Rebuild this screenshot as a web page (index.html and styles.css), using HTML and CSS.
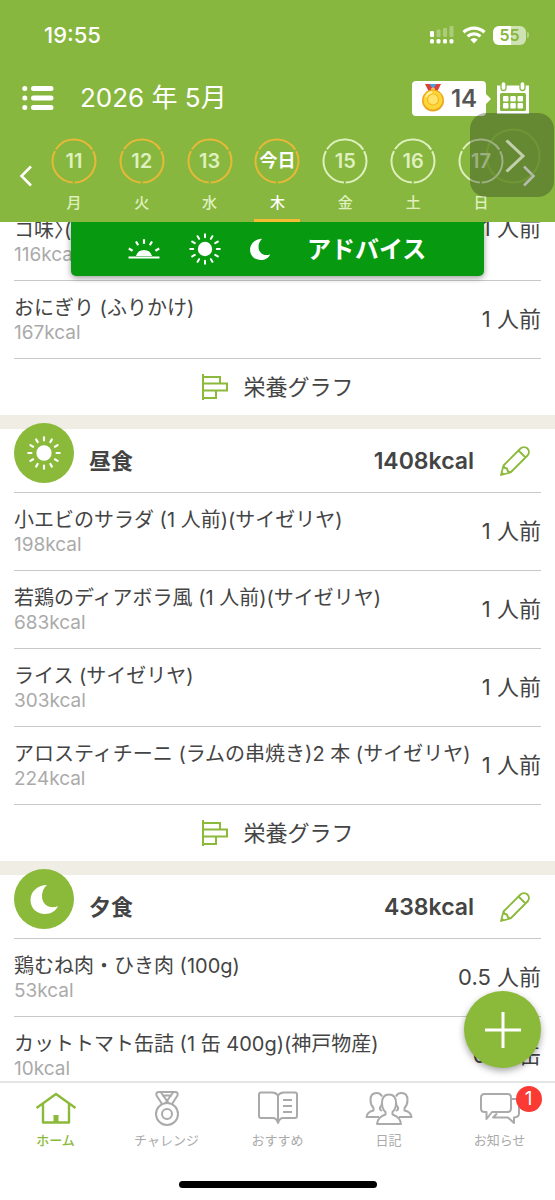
FILE: index.html
```html
<!DOCTYPE html>
<html lang="ja">
<head>
<meta charset="utf-8">
<meta name="viewport" content="width=device-width, initial-scale=1">
<title>食事記録</title>
<link rel="stylesheet" href="styles.css">
</head>
<body>
<svg class="defs" aria-hidden="true">
  <symbol id="ring" viewBox="0 0 46 46"><circle cx="23" cy="23" r="21.5" pathLength="360" fill="none" stroke="currentColor" stroke-width="2" stroke-dasharray="115 5" transform="rotate(93 23 23)"/></symbol>
  <symbol id="sun" viewBox="0 0 32 32"><circle cx="16" cy="16" r="7.2" fill="currentColor"/><g stroke="currentColor" stroke-width="2" stroke-linecap="round"><path d="M16 1.200v3M16 27.800v3M1.200 16h3M27.800 16h3M8.600 3.200l1.500 2.600M21.900 26.200l1.500 2.600M3.200 8.600l2.600 1.500M26.200 21.900l2.600 1.500M3.200 23.400l2.600-1.500M26.200 10.100l2.600-1.500M8.600 28.800l1.500-2.600M21.900 5.800l1.500-2.600"/></g></symbol>
  <symbol id="moon" viewBox="0 0 30 32"><path d="M18 2C8.500 2.200 1.500 8.500 1.500 17S8 31 16 31c6 0 11-3.200 13-8-1.500.8-3 1.200-5 1.200-6.500 0-11-4.600-11-11 0-4.600 1.700-8.200 5-11.200z" fill="currentColor"/></symbol>
  <symbol id="sunrise" viewBox="0 0 34 22"><path d="M9 18a8.300 8.300 0 0 1 16 0z" fill="currentColor"/><path d="M1.500 19.500h31M17 1.200v4.500M9 3.500l2.200 3.800M25 3.500l-2.200 3.800M1.800 10.500l3.800 2.200M32.200 10.500l-3.800 2.200" stroke="currentColor" stroke-width="2.200"/></symbol>
  <symbol id="bars" viewBox="0 0 28 28"><path d="M2 1v26M2 4h17v6.500H2M2 10.500h24v7H2M2 17.500h13V25H2" fill="none" stroke="currentColor" stroke-width="2"/></symbol>
  <symbol id="pencil" viewBox="0 0 32 32"><path d="M2 30l2.500-9.500L21.500 3.500a4.800 4.800 0 0 1 7 7L11.500 27.500zM19.500 5.500l7 7M4.500 20.500q.5 3 3.500 3 .5 3.500 3.500 4M2.800 27.500l1.800 1.800" fill="none" stroke="currentColor" stroke-width="1.800" stroke-linejoin="round"/></symbol>
</svg>

<header class="header">
  <div class="status">
    <time>19:55</time>
    <div class="status-icons">
      <svg width="26" height="18" viewBox="0 0 26 18" fill="#fff"><rect x="1" y="5" width="4" height="6" rx="1"/><g opacity=".3"><rect x="7.500" y="3.500" width="4" height="7.500" rx="1"/><rect x="14" y="2" width="4" height="9" rx="1"/><rect x="20.500" y="0" width="4" height="11" rx="1"/></g><rect x="1" y="13" width="4" height="4.500" rx="1.500"/><rect x="7.500" y="13" width="4" height="4.500" rx="1.500"/><rect x="14" y="13" width="4" height="4.500" rx="1.500"/><rect x="20.500" y="13" width="4" height="4.500" rx="1.500"/></svg>
      <svg width="24" height="18" viewBox="0 0 24 18"><g fill="none" stroke="#fff" stroke-width="3.200"><path d="M1.500 6.200a15.500 15.500 0 0 1 21 0"/><path d="M5.600 10.400a9.500 9.500 0 0 1 12.800 0"/></g><path d="M8.300 13.600a5.600 5.600 0 0 1 7.400 0L12 17.400z" fill="#fff"/></svg>
      <div class="battery">55</div>
    </div>
  </div>
  <div class="titlebar">
    <button class="icon-button" aria-label="メニュー"><svg width="32" height="26" viewBox="0 0 32 26" stroke="#fff" stroke-width="5" stroke-linecap="round"><path d="M2.800 3.500h.01M2.800 13h.01M2.800 22.500h.01M11.500 3.500H29M11.500 13H29M11.500 22.500H29"/></svg></button>
    <h1>2026 年 5月</h1>
    <button class="medal-count">
      <svg width="24" height="30" viewBox="0 0 24 30"><path d="M4 1h6l4 8H8z" fill="#d9423b"/><path d="M20 1h-6l-4 8h6z" fill="#d9423b"/><path d="M8.500 1h7L12 6z" fill="#4b9fdc"/><circle cx="12" cy="6.500" r="2" fill="#f6cf55"/><circle cx="12" cy="17.500" r="11" fill="#eda51c"/><circle cx="12" cy="17" r="9.500" fill="#ffd638"/><circle cx="12" cy="16.500" r="5.500" fill="#ffe36b" stroke="#f2b824" stroke-width="1.200"/><path d="M5 14a8 8 0 0 1 6-5" fill="none" stroke="#fff3a3" stroke-width="2"/></svg>
      <span>14</span>
    </button>
    <button class="icon-button" aria-label="カレンダー"><svg width="34" height="34" viewBox="0 0 34 34"><path d="M1 4.500h32V33H1z" fill="#fff"/><g stroke="#88b740" fill="#fff" stroke-width="1.300"><rect x="5" y=".5" width="5" height="9" rx="2.500"/><rect x="24" y=".5" width="5" height="9" rx="2.500"/></g><rect x="4" y="12" width="26" height="18" rx="1.500" fill="#88b740"/><g fill="#fff"><rect x="7" y="15" width="5.500" height="5.500" rx="1"/><rect x="14.300" y="15" width="5.500" height="5.500" rx="1"/><rect x="21.500" y="15" width="5.500" height="5.500" rx="1"/><rect x="7" y="22" width="5.500" height="5.500" rx="1"/><rect x="14.300" y="22" width="5.500" height="5.500" rx="1"/><rect x="21.500" y="22" width="5.500" height="5.500" rx="1"/></g></svg></button>
  </div>
  <nav class="week" aria-label="日付">
    <button class="arrow" aria-label="前の週"><svg width="14" height="22" viewBox="0 0 14 22"><path d="M12 1.500L2.500 11 12 20.500"/></svg></button>
    <div class="days">
      <button class="day gold"><span class="num"><svg><use href="#ring"/></svg>11</span><span>月</span></button>
      <button class="day gold"><span class="num"><svg><use href="#ring"/></svg>12</span><span>火</span></button>
      <button class="day gold"><span class="num"><svg><use href="#ring"/></svg>13</span><span>水</span></button>
      <button class="day gold today"><span class="num"><svg><use href="#ring"/></svg>今日</span><span>木</span></button>
      <button class="day"><span class="num"><svg><use href="#ring"/></svg>15</span><span>金</span></button>
      <button class="day"><span class="num"><svg><use href="#ring"/></svg>16</span><span>土</span></button>
      <button class="day"><span class="num"><svg><use href="#ring"/></svg>17</span><span>日</span></button>
    </div>
    <button class="arrow" aria-label="次の週"><svg width="14" height="22" viewBox="0 0 14 22"><path d="M2 1.500L11.500 11 2 20.500"/></svg></button>
  </nav>
  <div class="assist"><svg width="84" height="84" viewBox="0 0 84 84" fill="none"><circle cx="43" cy="43" r="26.500" stroke="#88b740" stroke-opacity=".3" stroke-width="2"/><path d="M36.500 27.500L53 43 36.500 58.500" stroke="#c1cfac" stroke-width="3"/></svg></div>
</header>

<main class="content">
  <button class="advice">
    <svg width="34" height="22"><use href="#sunrise"/></svg>
    <svg width="32" height="32"><use href="#sun"/></svg>
    <svg width="22" height="24"><use href="#moon"/></svg>
    <span>アドバイス</span>
  </button>
  <div class="scroll">
    <section>
      <ul>
        <li class="two-line"><div><p>コ味〉(</p><small>116kcal</small></div><b>1 人前</b></li>
        <li><div><p>おにぎり (ふりかけ)</p><small>167kcal</small></div><b>1 人前</b></li>
      </ul>
      <button class="graph"><svg width="28" height="28"><use href="#bars"/></svg><span>栄養グラフ</span></button>
    </section>
    <section class="meal">
      <header class="meal-head"><span class="meal-icon"><svg width="34" height="34"><use href="#sun"/></svg></span><h2>昼食</h2><strong>1408kcal</strong><button class="icon-button" aria-label="昼食を編集"><svg width="32" height="32"><use href="#pencil"/></svg></button></header>
      <ul>
        <li><div><p>小エビのサラダ (1 人前)(サイゼリヤ)</p><small>198kcal</small></div><b>1 人前</b></li>
        <li><div><p>若鶏のディアボラ風 (1 人前)(サイゼリヤ)</p><small>683kcal</small></div><b>1 人前</b></li>
        <li><div><p>ライス (サイゼリヤ)</p><small>303kcal</small></div><b>1 人前</b></li>
        <li><div><p>アロスティチーニ (ラムの串焼き)2 本 (サイゼリヤ)</p><small>224kcal</small></div><b>1 人前</b></li>
      </ul>
      <button class="graph"><svg width="28" height="28"><use href="#bars"/></svg><span>栄養グラフ</span></button>
    </section>
    <section class="meal">
      <header class="meal-head"><span class="meal-icon"><svg width="30" height="32"><use href="#moon"/></svg></span><h2>夕食</h2><strong>438kcal</strong><button class="icon-button" aria-label="夕食を編集"><svg width="32" height="32"><use href="#pencil"/></svg></button></header>
      <ul>
        <li><div><p>鶏むね肉・ひき肉 (100g)</p><small>53kcal</small></div><b>0.5 人前</b></li>
        <li><div><p>カットトマト缶詰 (1 缶 400g)(神戸物産)</p><small>10kcal</small></div><b>0.15 缶</b></li>
      </ul>
    </section>
  </div>
  <button class="fab" aria-label="追加"><svg width="38" height="38" viewBox="0 0 38 38"><path d="M19 1v36M1 19h36" stroke="#fff" stroke-width="3"/></svg></button>
</main>

<footer class="footer">
  <nav class="tabs">
    <a class="active" href="#home"><svg width="42" height="36" viewBox="0 0 42 36"><path d="M1.500 17L21 3l19.500 14M8 13v18.500h26V13" stroke-width="2.400"/><path d="M18.500 24h5v7.500h-5z" fill="currentColor" stroke="none"/></svg><span>ホーム</span></a>
    <a href="#challenge"><svg width="30" height="36" viewBox="0 0 30 36"><circle cx="15" cy="23" r="11"/><circle cx="15" cy="23" r="5"/><path d="M10 13L4.500 4.500Q3.500 1 7 1h16q3.500 0 2.500 3.500L20 13M9 1.500L16.500 12M21 1.500L13.500 12M10 4.500h10"/></svg><span>チャレンジ</span></a>
    <a href="#recommend"><svg width="42" height="36" viewBox="0 0 42 36"><path d="M21 4.500Q19 1.500 15 1.500H4q-2 0-2 2V25q0 2 2 2h12q3.500 0 5 5 1.500-5 5-5h12q2 0 2-2V3.500q0-2-2-2H27q-4 0-6 3V31M26 9h9M26 15h9M26 21h9"/></svg><span>おすすめ</span></a>
    <a href="#diary"><svg width="48" height="36" viewBox="0 0 48 36"><path d="M17 20l-2-1.500v-2q2-2 2-5M17 5.500Q15.500 2 11.500 2 5.500 2 5.500 9q0 5 3 8v2.500Q2 21 1.500 26H14M31 20l2-1.500v-2q-2-2-2-5M31 5.500Q32.500 2 36.500 2q6 0 6 7 0 5-3 8v2.500Q46 21 46.500 26H34"/><path d="M12 33q.5-7 8.500-9.500V21q-3.500-3-3.500-9 0-8.500 7-8.500t7 8.500q0 6-3.500 9v2.500Q35.500 26 36 33z" fill="#fff"/></svg><span>日記</span></a>
    <a href="#news"><svg width="42" height="36" viewBox="0 0 42 36"><path d="M33 8h3.500Q40 8 40 11.500v11q0 3.500-5 4V32l-6-5.500H14l4-4"/><path d="M5.500 3h23Q32 3 32 6.500v11Q32 21 28.500 21H13l-5.500 7v-7h-2Q2 21 2 17.500v-11Q2 3 5.500 3z" fill="#fff"/></svg><span>お知らせ</span><i class="badge">1</i></a>
  </nav>
  <div class="home-indicator"></div>
</footer>
</body>
</html>
```

FILE: styles.css
```css
* { box-sizing: border-box; }

:root {
  --green: #88b740;
  --leaf: #8bb93a;
  --gold: #e7b936;
  --text: #444;
}

body {
  margin: 0;
  height: 100vh;
  display: flex;
  flex-direction: column;
  background: #fff;
  color: var(--text);
  font-family: Inter, "Noto Sans CJK JP", sans-serif;
  overflow: hidden;
}

button {
  border: 0;
  padding: 0;
  background: none;
  color: inherit;
  font: inherit;
}

h1, h2, p, ul { margin: 0; padding: 0; }
svg { display: block; flex: none; }
.defs { position: absolute; width: 0; height: 0; }
.icon-button { display: flex; }

.header {
  position: relative;
  background: var(--green);
  color: #fff;
}

.status {
  display: flex;
  justify-content: space-between;
  align-items: center;
  height: 70px;
  padding: 0 25px 0 44px;
  font-size: 22px;
  font-weight: 500;
}

.status-icons { display: flex; align-items: center; gap: 7px; }

.battery {
  position: relative;
  width: 33px;
  height: 19px;
  margin-right: 4px;
  border-radius: 6px;
  background: linear-gradient(90deg, #fff 55%, #cfe2b3 55%);
  color: var(--green);
  font-size: 16px;
  font-weight: 600;
  line-height: 19px;
  text-align: center;
}

.battery::after {
  content: "";
  position: absolute;
  left: 34px;
  top: 6px;
  width: 2px;
  height: 6px;
  border-radius: 0 2px 2px 0;
  background: #b5d28a;
}

.titlebar {
  display: flex;
  align-items: center;
  height: 56px;
  padding: 0 25px 0 22px;
}

.titlebar h1 {
  margin-left: 26px;
  font-size: 26px;
  font-weight: 400;
  line-height: 36px;
}

.medal-count {
  position: relative;
  display: flex;
  align-items: center;
  justify-content: center;
  gap: 6px;
  width: 74px;
  height: 35px;
  margin: 0 10px 0 auto;
  border-radius: 4px;
  background: #fff;
  color: #555;
  font-size: 24px;
  font-weight: 600;
}

.medal-count::after {
  content: "";
  position: absolute;
  left: 74px;
  top: 13px;
  border: 5px solid transparent;
  border-left-color: #fff;
  border-right: 0;
}

.week {
  display: flex;
  align-items: center;
  height: 96px;
  padding: 0 19px;
}

.arrow { display: flex; justify-content: center; width: 14px; padding-top: 4px; }
.arrow path { fill: none; stroke: #fff; stroke-width: 2.5; }

.days {
  flex: 1;
  display: grid;
  grid-template-columns: repeat(7, 1fr);
  align-self: stretch;
  margin: 0 7px;
}

.day {
  display: flex;
  flex-direction: column;
  align-items: center;
  padding-top: 12px;
  color: #def0bd;
  font-size: 15px;
  font-weight: 500;
}

.num {
  position: relative;
  width: 46px;
  height: 46px;
  margin-bottom: 7px;
  font-size: 20px;
  font-weight: 600;
  line-height: 46px;
  text-align: center;
}

.num svg { position: absolute; inset: 0; width: 46px; height: 46px; }
.gold .num svg { color: var(--gold); }
.today { color: #fff; }
.today .num { font-size: 18px; }
.day > span:last-child { width: 46px; height: 31px; line-height: 24px; }
.today > span:last-child { border-bottom: 3px solid #f4bc32; }

.assist {
  position: absolute;
  right: 1px;
  top: 113px;
  border-radius: 16px;
  background: rgba(30, 45, 20, .33);
}

.content {
  position: relative;
  flex: 1;
  min-height: 0;
  overflow: hidden;
}

.scroll { margin-top: -45px; }

.advice {
  position: absolute;
  z-index: 1;
  top: 0;
  left: 71px;
  right: 71px;
  height: 54px;
  display: flex;
  align-items: center;
  padding-left: 56px;
  gap: 28px;
  border-radius: 0 0 5px 5px;
  background: #07990f;
  box-shadow: 0 2px 6px rgba(0, 0, 0, .4);
  color: #fff;
  font-size: 24px;
  font-weight: 700;
}

.advice span { margin-left: 8px; padding-bottom: 3px; }

ul { list-style: none; padding: 0 14px; }

li {
  display: flex;
  align-items: center;
  justify-content: space-between;
  height: 78px;
  border-bottom: 1px solid #c8c8c8;
  white-space: nowrap;
}

li.two-line { height: 104px; }
.two-line div { padding-top: 26px; font-feature-settings: "halt"; }
li p { font-size: 20px; line-height: 26px; }
li small { display: block; color: #aaa; font-size: 19px; line-height: 24px; }
li b { padding-bottom: 5px; font-size: 22px; font-weight: 400; }

.graph {
  display: flex;
  align-items: center;
  justify-content: center;
  gap: 14px;
  width: 100%;
  height: 56px;
  font-size: 22px;
}

.graph span { padding-bottom: 4px; }
.graph svg, .meal-head button { color: var(--leaf); }

.meal { border-top: 14px solid #efede4; }

.meal-head {
  display: flex;
  align-items: center;
  height: 64px;
  margin: 0 14px;
  padding-right: 10px;
  border-bottom: 1px solid #c8c8c8;
}

.meal-icon {
  display: grid;
  place-items: center;
  width: 60px;
  height: 60px;
  margin-bottom: 15px;
  border-radius: 50%;
  background: var(--leaf);
  color: #fff;
}

.meal-head h2 { margin-left: 15px; padding-bottom: 4px; font-size: 22px; font-weight: 600; }
.meal-head strong { margin-left: auto; font-size: 23px; font-weight: 600; }
.meal-head button { margin-left: 25px; }

.fab {
  position: absolute;
  right: 14px;
  bottom: 13px;
  display: grid;
  place-items: center;
  width: 77px;
  height: 77px;
  border-radius: 50%;
  background: var(--leaf);
  box-shadow: 0 3px 7px rgba(0, 0, 0, .35);
}

.footer { border-top: 2px solid #e5e5e5; background: #fff; }
.tabs { display: grid; grid-template-columns: repeat(5, 1fr); height: 98px; }

.tabs a {
  position: relative;
  display: flex;
  flex-direction: column;
  align-items: center;
  gap: 3px;
  padding-top: 8px;
  color: #aaa;
  font-size: 13px;
  line-height: 20px;
  text-decoration: none;
}

.tabs svg { fill: none; stroke: currentColor; stroke-width: 2; stroke-linejoin: round; }
.tabs .active { color: var(--leaf); font-weight: 500; }

.badge {
  position: absolute;
  top: 3px;
  left: 50%;
  width: 26px;
  height: 26px;
  margin-left: 16px;
  border-radius: 50%;
  background: #fb3a33;
  color: #fff;
  font-size: 19px;
  font-style: normal;
  line-height: 26px;
  text-align: center;
}

.home-indicator {
  width: 198px;
  height: 7px;
  margin: 0 auto 12px;
  border-radius: 4px;
  background: #000;
}
```
